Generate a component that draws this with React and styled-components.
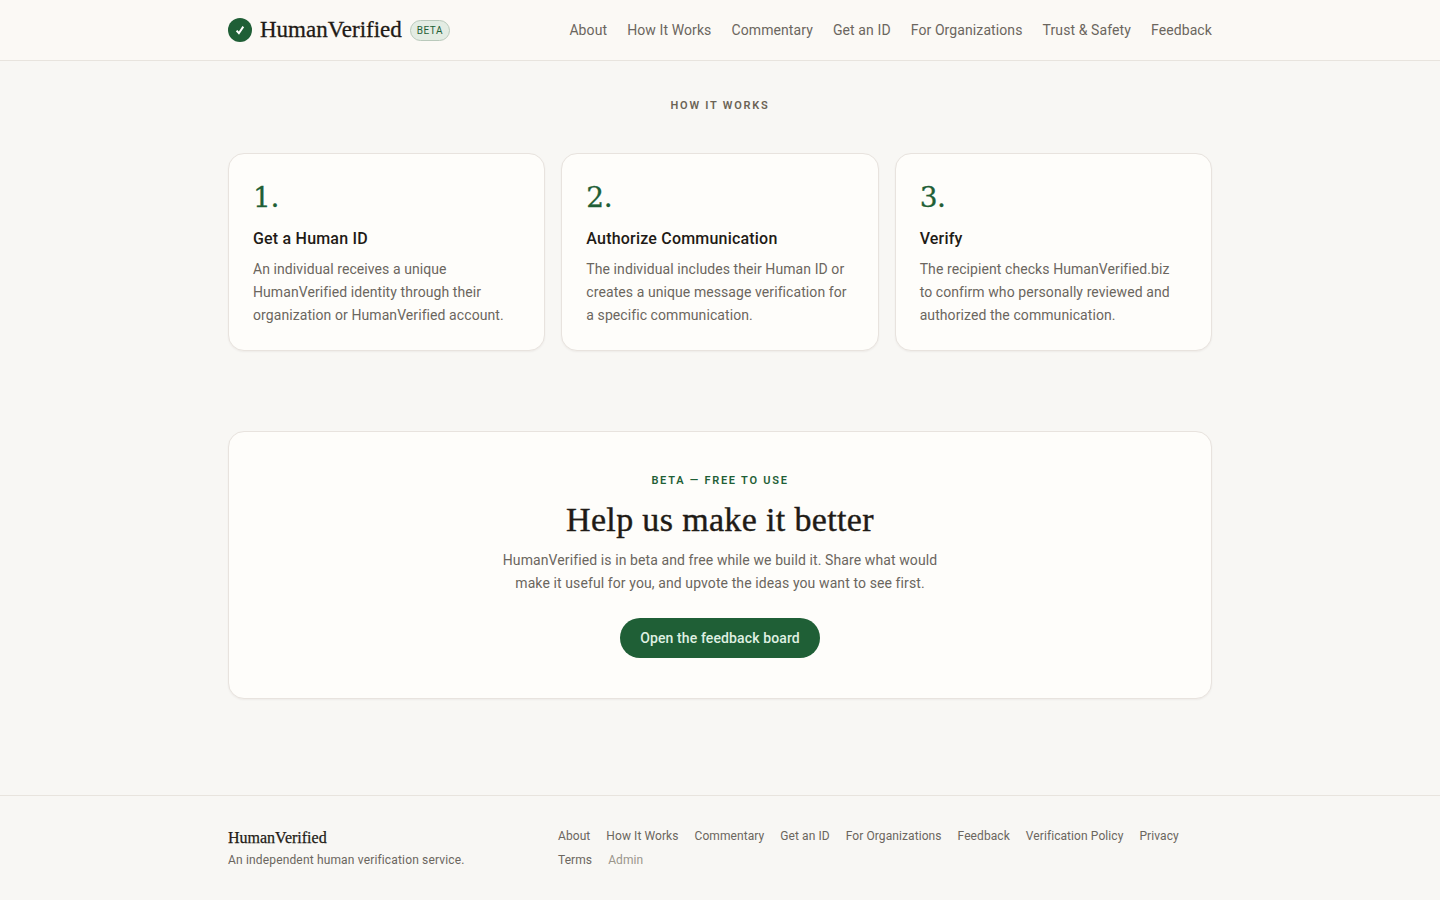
import React from 'react';
import styled, { createGlobalStyle } from 'styled-components';

const SANS = 'Roboto, "Liberation Sans", sans-serif';
const SERIF = '"Liberation Serif", "DejaVu Serif", serif';

const GlobalStyle = createGlobalStyle`
  * { box-sizing: border-box; }
  html, body { margin: 0; padding: 0; }
  body {
    background: #f8f7f4;
    color: #1f1b16;
    font-family: ${SANS};
  }
`;

const Header = styled.header`
  height: 61px;
  background: #fbf9f5;
  border-bottom: 1px solid #e8e4de;
`;

const Wrap = styled.div`
  width: 984px;
  margin: 0 auto;
`;

const HeaderRow = styled(Wrap)`
  height: 60px;
  display: flex;
  align-items: center;
  justify-content: space-between;
`;

const Brand = styled.div`
  display: flex;
  align-items: center;
`;

const LogoMark = styled.span`
  width: 24px;
  height: 24px;
  border-radius: 50%;
  background: #1f5f36;
  display: flex;
  align-items: center;
  justify-content: center;
`;

const BrandName = styled.span`
  font-family: ${SERIF};
  font-size: 23px;
  font-weight: 400;
  margin-left: 8px;
  color: #1f1b16;
  -webkit-text-stroke: 0.3px #1f1b16;
`;

const BetaTag = styled.span`
  margin-left: 8px;
  height: 21px;
  padding: 0 6px;
  border: 1px solid #b9c9bb;
  border-radius: 11px;
  background: #e3ece3;
  color: #1f5f36;
  font-size: 10px;
  font-weight: 400;
  letter-spacing: 0.5px;
  display: flex;
  align-items: center;
`;

const Nav = styled.nav`
  display: flex;
  gap: 20px;
`;

const NavLink = styled.a`
  font-size: 14px;
  line-height: 20px;
  letter-spacing: 0.1px;
  color: #6b665e;
  text-decoration: none;
`;

const Eyebrow = styled.div`
  text-align: center;
  font-size: 11px;
  line-height: 15px;
  font-weight: 600;
  letter-spacing: 1.75px;
  text-transform: uppercase;
  color: ${p => (p.$green ? '#1f5f36' : '#6b6355')};
`;

const HowSection = styled.section`
  padding-top: 37px;
`;

const Cards = styled.div`
  margin-top: 40px;
  display: grid;
  grid-template-columns: repeat(3, 1fr);
  gap: 16px;
`;

const Card = styled.div`
  height: 198px;
  padding: 24px;
  background: #fefdfa;
  border: 1px solid #e8e3de;
  border-radius: 16px;
  box-shadow: 0 1px 2px rgba(31, 27, 22, 0.05);
`;

const StepNumber = styled.div`
  font-family: "DejaVu Serif", serif;
  font-size: 28px;
  line-height: 40px;
  letter-spacing: -0.4px;
  color: #1f5f36;
  -webkit-text-stroke: 0.3px #1f5f36;
`;

const StepTitle = styled.h3`
  margin: 10px 0 8px;
  font-size: 16px;
  line-height: 22px;
  font-weight: 500;
  letter-spacing: 0.2px;
  color: #1f1b16;
`;

const StepText = styled.p`
  margin: 0;
  font-size: 14px;
  line-height: 23px;
  letter-spacing: 0.08px;
  color: #6b665e;
`;

const FeedbackCard = styled.section`
  margin-top: 80px;
  height: 268px;
  padding-top: 41px;
  background: #fefdfa;
  border: 1px solid #e8e3de;
  border-radius: 16px;
  box-shadow: 0 1px 2px rgba(31, 27, 22, 0.05);
  display: flex;
  flex-direction: column;
  align-items: center;
`;

const FeedbackTitle = styled.h2`
  margin: 11px 0 0;
  font-family: ${SERIF};
  font-size: 34px;
  line-height: 42px;
  font-weight: 400;
  letter-spacing: 0.35px;
  color: #1f1b16;
  -webkit-text-stroke: 0.4px #1f1b16;
`;

const FeedbackText = styled.p`
  margin: 8px 0 0;
  width: 460px;
  text-align: center;
  font-size: 14px;
  line-height: 23px;
  letter-spacing: 0.1px;
  color: #6b665e;
`;

const FeedbackButton = styled.a`
  margin-top: 23px;
  height: 40px;
  padding: 0 20px;
  border-radius: 20px;
  background: #1f5f36;
  color: #dff0e2;
  font-size: 14px;
  font-weight: 500;
  letter-spacing: 0.12px;
  display: flex;
  align-items: center;
  text-decoration: none;
`;

const Footer = styled.footer`
  margin-top: 96px;
  height: 105px;
  border-top: 1px solid #e8e4de;
`;

const FooterRow = styled(Wrap)`
  padding-top: 28px;
  display: flex;
`;

const FooterBrand = styled.div`
  width: 330px;
  padding-top: 2px;
`;

const FooterName = styled.div`
  font-family: ${SERIF};
  font-size: 16px;
  line-height: 24px;
  -webkit-text-stroke: 0.25px #1f1b16;
`;

const FooterTagline = styled.div`
  font-size: 12px;
  line-height: 20px;
  letter-spacing: 0.16px;
  color: #6b665e;
`;

const FooterLinks = styled.div`
  flex: 1;
  display: flex;
  flex-wrap: wrap;
  gap: 0 16px;
`;

const FooterLink = styled.a`
  font-size: 12px;
  line-height: 24px;
  letter-spacing: 0.08px;
  color: ${p => (p.$muted ? '#9a958b' : '#6b665e')};
  text-decoration: none;
`;

const navItems = ['About', 'How It Works', 'Commentary', 'Get an ID', 'For Organizations', 'Trust & Safety', 'Feedback'];

const steps = [
  {
    n: '1.',
    title: 'Get a Human ID',
    lines: ['An individual receives a unique', 'HumanVerified identity through their', 'organization or HumanVerified account.'],
  },
  {
    n: '2.',
    title: 'Authorize Communication',
    lines: ['The individual includes their Human ID or', 'creates a unique message verification for', 'a specific communication.'],
  },
  {
    n: '3.',
    title: 'Verify',
    lines: ['The recipient checks HumanVerified.biz', 'to confirm who personally reviewed and', 'authorized the communication.'],
  },
];

const footerItems = ['About', 'How It Works', 'Commentary', 'Get an ID', 'For Organizations', 'Feedback', 'Verification Policy', 'Privacy', 'Terms'];

export default function App() {
  return (
    <>
      <GlobalStyle />
      <Header>
        <HeaderRow>
          <Brand>
            <LogoMark>
              <svg width="10" height="10" viewBox="0 0 10 10" aria-hidden="true">
                <path d="M1.6 5.6 L3.9 8.2 L8.3 1.6" fill="none" stroke="#fff" strokeWidth="2" />
              </svg>
            </LogoMark>
            <BrandName>HumanVerified</BrandName>
            <BetaTag>BETA</BetaTag>
          </Brand>
          <Nav>
            {navItems.map(item => (
              <NavLink key={item} href="#">{item}</NavLink>
            ))}
          </Nav>
        </HeaderRow>
      </Header>
      <Wrap as="main">
        <HowSection>
          <Eyebrow>How it works</Eyebrow>
          <Cards>
            {steps.map(step => (
              <Card key={step.n}>
                <StepNumber>{step.n}</StepNumber>
                <StepTitle>{step.title}</StepTitle>
                <StepText>
                  {step.lines.map(line => (
                    <React.Fragment key={line}>{line}<br /></React.Fragment>
                  ))}
                </StepText>
              </Card>
            ))}
          </Cards>
        </HowSection>
        <FeedbackCard>
          <Eyebrow $green>Beta — free to use</Eyebrow>
          <FeedbackTitle>Help us make it better</FeedbackTitle>
          <FeedbackText>
            HumanVerified is in beta and free while we build it. Share what would make it useful for you, and upvote the ideas you want to see first.
          </FeedbackText>
          <FeedbackButton href="#">Open the feedback board</FeedbackButton>
        </FeedbackCard>
      </Wrap>
      <Footer>
        <FooterRow>
          <FooterBrand>
            <FooterName>HumanVerified</FooterName>
            <FooterTagline>An independent human verification service.</FooterTagline>
          </FooterBrand>
          <FooterLinks>
            {footerItems.map(item => (
              <FooterLink key={item} href="#">{item}</FooterLink>
            ))}
            <FooterLink $muted href="#">Admin</FooterLink>
          </FooterLinks>
        </FooterRow>
      </Footer>
    </>
  );
}
